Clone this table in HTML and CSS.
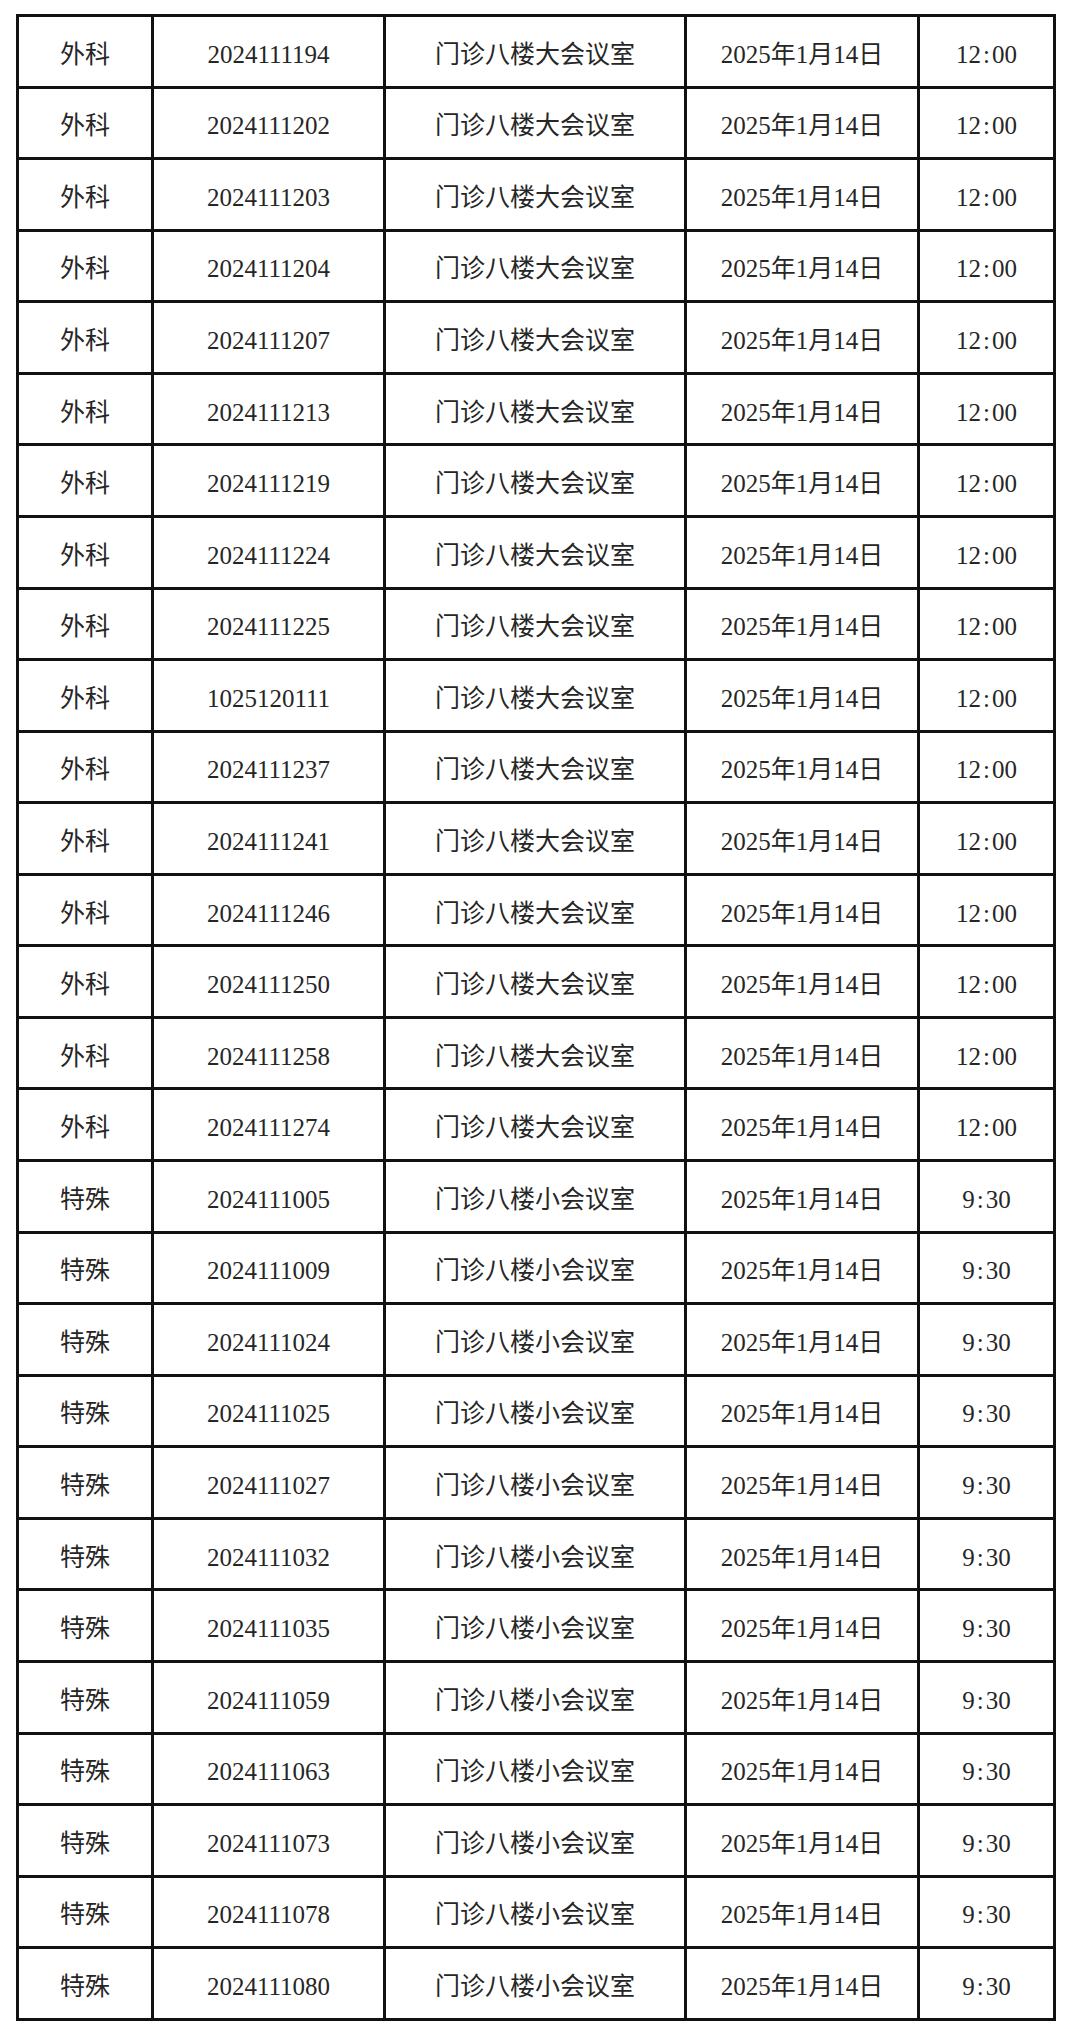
FILE: index.html
```html
<!DOCTYPE html>
<html lang="zh-CN">
<head>
<meta charset="utf-8">
<title>名单</title>
<link rel="stylesheet" href="styles.css">
</head>
<body>
<table class="roster">
<colgroup>
<col class="c-dept"><col class="c-id"><col class="c-room"><col class="c-date"><col class="c-time">
</colgroup>
<tbody>
<tr><td>外科</td><td>2024111194</td><td>门诊八楼大会议室</td><td>2025年1月14日</td><td>12<span class="colon">:</span>00</td></tr>
<tr><td>外科</td><td>2024111202</td><td>门诊八楼大会议室</td><td>2025年1月14日</td><td>12<span class="colon">:</span>00</td></tr>
<tr><td>外科</td><td>2024111203</td><td>门诊八楼大会议室</td><td>2025年1月14日</td><td>12<span class="colon">:</span>00</td></tr>
<tr><td>外科</td><td>2024111204</td><td>门诊八楼大会议室</td><td>2025年1月14日</td><td>12<span class="colon">:</span>00</td></tr>
<tr><td>外科</td><td>2024111207</td><td>门诊八楼大会议室</td><td>2025年1月14日</td><td>12<span class="colon">:</span>00</td></tr>
<tr><td>外科</td><td>2024111213</td><td>门诊八楼大会议室</td><td>2025年1月14日</td><td>12<span class="colon">:</span>00</td></tr>
<tr><td>外科</td><td>2024111219</td><td>门诊八楼大会议室</td><td>2025年1月14日</td><td>12<span class="colon">:</span>00</td></tr>
<tr><td>外科</td><td>2024111224</td><td>门诊八楼大会议室</td><td>2025年1月14日</td><td>12<span class="colon">:</span>00</td></tr>
<tr><td>外科</td><td>2024111225</td><td>门诊八楼大会议室</td><td>2025年1月14日</td><td>12<span class="colon">:</span>00</td></tr>
<tr><td>外科</td><td>1025120111</td><td>门诊八楼大会议室</td><td>2025年1月14日</td><td>12<span class="colon">:</span>00</td></tr>
<tr><td>外科</td><td>2024111237</td><td>门诊八楼大会议室</td><td>2025年1月14日</td><td>12<span class="colon">:</span>00</td></tr>
<tr><td>外科</td><td>2024111241</td><td>门诊八楼大会议室</td><td>2025年1月14日</td><td>12<span class="colon">:</span>00</td></tr>
<tr><td>外科</td><td>2024111246</td><td>门诊八楼大会议室</td><td>2025年1月14日</td><td>12<span class="colon">:</span>00</td></tr>
<tr><td>外科</td><td>2024111250</td><td>门诊八楼大会议室</td><td>2025年1月14日</td><td>12<span class="colon">:</span>00</td></tr>
<tr><td>外科</td><td>2024111258</td><td>门诊八楼大会议室</td><td>2025年1月14日</td><td>12<span class="colon">:</span>00</td></tr>
<tr><td>外科</td><td>2024111274</td><td>门诊八楼大会议室</td><td>2025年1月14日</td><td>12<span class="colon">:</span>00</td></tr>
<tr><td>特殊</td><td>2024111005</td><td>门诊八楼小会议室</td><td>2025年1月14日</td><td>9<span class="colon">:</span>30</td></tr>
<tr><td>特殊</td><td>2024111009</td><td>门诊八楼小会议室</td><td>2025年1月14日</td><td>9<span class="colon">:</span>30</td></tr>
<tr><td>特殊</td><td>2024111024</td><td>门诊八楼小会议室</td><td>2025年1月14日</td><td>9<span class="colon">:</span>30</td></tr>
<tr><td>特殊</td><td>2024111025</td><td>门诊八楼小会议室</td><td>2025年1月14日</td><td>9<span class="colon">:</span>30</td></tr>
<tr><td>特殊</td><td>2024111027</td><td>门诊八楼小会议室</td><td>2025年1月14日</td><td>9<span class="colon">:</span>30</td></tr>
<tr><td>特殊</td><td>2024111032</td><td>门诊八楼小会议室</td><td>2025年1月14日</td><td>9<span class="colon">:</span>30</td></tr>
<tr><td>特殊</td><td>2024111035</td><td>门诊八楼小会议室</td><td>2025年1月14日</td><td>9<span class="colon">:</span>30</td></tr>
<tr><td>特殊</td><td>2024111059</td><td>门诊八楼小会议室</td><td>2025年1月14日</td><td>9<span class="colon">:</span>30</td></tr>
<tr><td>特殊</td><td>2024111063</td><td>门诊八楼小会议室</td><td>2025年1月14日</td><td>9<span class="colon">:</span>30</td></tr>
<tr><td>特殊</td><td>2024111073</td><td>门诊八楼小会议室</td><td>2025年1月14日</td><td>9<span class="colon">:</span>30</td></tr>
<tr><td>特殊</td><td>2024111078</td><td>门诊八楼小会议室</td><td>2025年1月14日</td><td>9<span class="colon">:</span>30</td></tr>
<tr><td>特殊</td><td>2024111080</td><td>门诊八楼小会议室</td><td>2025年1月14日</td><td>9<span class="colon">:</span>30</td></tr>
</tbody>
</table>
</body>
</html>
```

FILE: styles.css
```css
html, body {
  margin: 0;
  padding: 0;
  background: #ffffff;
}

body {
  padding: 14px 0 0 16px;
}

.roster {
  border-collapse: collapse;
  table-layout: fixed;
  width: 1040px;
  font-family: "Liberation Serif", "Noto Sans CJK SC", serif;
  font-size: 25px;
  color: #262626;
}

.c-dept { width: 135px; }
.c-id { width: 232px; }
.c-room { width: 301px; }
.c-date { width: 233px; }
.c-time { width: 136px; }

.roster tr {
  height: 71.57px;
}

.roster td {
  border: 3px solid #111111;
  padding: 6px 0 0 0;
  text-align: center;
  vertical-align: middle;
  line-height: 1;
  white-space: nowrap;
}

.colon {
  margin: 0 2px;
}
```
